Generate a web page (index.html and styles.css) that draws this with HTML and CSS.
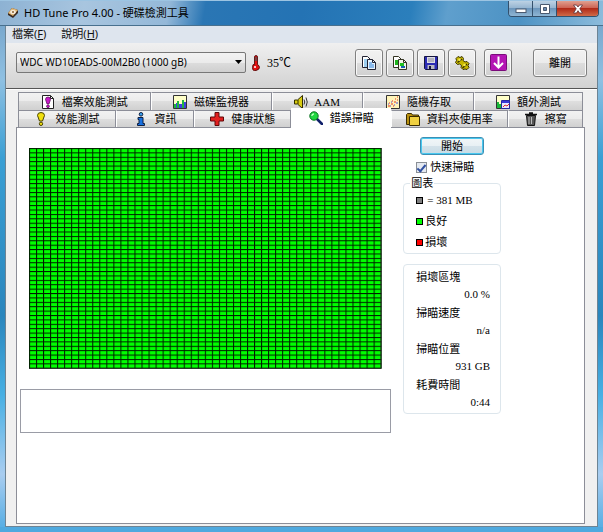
FILE: index.html
```html
<!DOCTYPE html>
<html lang="zh-Hant">
<head>
    <meta charset="UTF-8">
    <meta name="viewport" content="width=device-width, initial-scale=1.0">
    <title>HD Tune Pro 4.00 - 硬碟檢測工具</title>
    <link rel="stylesheet" href="styles.css">
</head>
<body>
<div class="window">
    <header class="titlebar">
        <svg class="app-icon" viewBox="0 0 12 12">
            <path d="M5 1 11 3 11 6 6 11 1 8 1 6z" fill="#3a2a20"/>
            <path d="M5 1 11 3 6 9 1 6z" fill="#e2b878"/>
            <ellipse cx="6" cy="5" rx="2.8" ry="2" fill="#f6ecdc"/>
            <circle cx="6" cy="5" r="1" fill="#8a6030"/>
        </svg>
        <h1>HD Tune Pro 4.00 - 硬碟檢測工具</h1>
        <div class="window-buttons">
            <button type="button" class="win-min" aria-label="最小化">
                <svg viewBox="0 0 12 10"><rect x="1" y="5" width="10" height="3.500" fill="#fff" stroke="#4a5a70"/></svg>
            </button>
            <button type="button" class="win-max" aria-label="最大化">
                <svg viewBox="0 0 12 10"><path d="M1.500.5h9v9h-9z" fill="#fff" stroke="#4a5a70"/><path d="M4.500 3.500h3v3h-3z" fill="#6a8ab0" stroke="#4a5a70"/></svg>
            </button>
            <button type="button" class="win-close" aria-label="關閉">
                <svg viewBox="0 0 12 10"><path d="M1.500 1h3L6 3l1.500-2h3L7.800 4.800 10.500 9h-3L6 6.700 4.500 9h-3l2.700-4.200z" fill="#fff" stroke="#5a3038" stroke-width=".8"/></svg>
            </button>
        </div>
    </header>

    <div class="client">
        <nav class="menubar">
            <a href="#file">檔案(<u>F</u>)</a>
            <a href="#help">說明(<u>H</u>)</a>
        </nav>

        <div class="toolbar">
            <div class="drive">
                <select aria-label="硬碟">
                    <option>WDC WD10EADS-00M2B0 (1000 gB)</option>
                </select>
                <svg class="drive-arrow" viewBox="0 0 7 4"><path d="M0 0h7L3.500 4z" fill="#000"/></svg>
            </div>
            <svg class="thermo" viewBox="0 0 8 16">
                <path d="M2.500 2q0-1.500 1.500-1.500T5.500 2v7.500q2 1 2 3T4 15.500.5 12.500t2-3z" fill="#e01010" stroke="#400" stroke-width=".8"/>
                <path d="M3.300 2h1.400v4H3.300z" fill="#555"/>
                <circle cx="3" cy="12" r="1" fill="#fff"/>
            </svg>
            <span class="temp">35℃</span>
            <div class="tools">
                <button type="button" class="tool" aria-label="複製文字">
                    <svg viewBox="0 0 16 16">
                        <path d="M1.500 1.500h5l3 3v8h-8z" fill="#fff" stroke="#223"/>
                        <path d="M3 5h4M3 7h5M3 9h5M3 11h4" stroke="#3a9be0"/>
                        <path d="M6.500 4.500h5l3 3v7h-8z" fill="#e8f4ff" stroke="#223"/>
                        <path d="M11.500 4.500v3h3" fill="none" stroke="#223"/>
                        <path d="M8 8h3M8 10h5M8 12h5" stroke="#2a7fd8"/>
                    </svg>
                </button>
                <button type="button" class="tool" aria-label="複製圖片">
                    <svg viewBox="0 0 16 16">
                        <path d="M1.500 1.500h5l3 3v8h-8z" fill="#fff" stroke="#332"/>
                        <path d="M3 5h3v5H3z" fill="#1fb51f"/>
                        <path d="M6.500 4.500h5l3 3v7h-8z" fill="#f4f4e8" stroke="#332"/>
                        <path d="M11.500 4.500v3h3" fill="none" stroke="#332"/>
                        <path d="M8 8h4v3H8z" fill="#20c020"/>
                        <path d="M9 11h4v2H9z" fill="#1860b0"/>
                    </svg>
                </button>
                <button type="button" class="tool" aria-label="儲存">
                    <svg viewBox="0 0 16 16">
                        <path d="M1.500 1.500h13v13h-12l-1-1z" fill="#2b2bb4" stroke="#151540"/>
                        <path d="M4 2h8v6H4z" fill="#dcdce4"/>
                        <path d="M5 4h6M5 6h6" stroke="#889"/>
                        <path d="M4.500 10h7v4h-7z" fill="#b8b8c0"/>
                        <path d="M6 11h2v3H6z" fill="#151540"/>
                    </svg>
                </button>
                <button type="button" class="tool" aria-label="選項">
                    <svg viewBox="0 0 16 16">
                        <path d="M2 3.500 4 1.500l2 1 2-1 1.500 2-.5 2 2 1.500 2-.5 2 2-1 2 1 2-2 2-2-.5-2 .5-2-2 .5-2-2-1.500-2 .5-2-2 1-2z" fill="#c8b800" stroke="#3a3400"/>
                        <path d="M3.500 7.500 8 4M8.500 13 13 9" stroke="#3a3400" stroke-width="1.500"/>
                        <circle cx="5.500" cy="4.800" r="1.200" fill="#f4ec50"/>
                        <circle cx="10.500" cy="10" r="1.300" fill="#f4ec50"/>
                    </svg>
                </button>
                <button type="button" class="tool tool-down" aria-label="最小化到系統匣">
                    <svg class="wide" viewBox="0 0 17 17">
                        <rect x=".5" y=".5" width="16" height="16" rx="1" fill="#b414b4" stroke="#7a0c7a"/>
                        <path d="M8.500 2.500v11M4 9l4.500 4.500L13 9" fill="none" stroke="#fff" stroke-width="2"/>
                    </svg>
                </button>
                <button type="button" class="exit">離開</button>
            </div>
        </div>

        <main class="content">
            <div class="tabs" role="tablist">
                <div class="tab-row tab-row-back">
                    <button type="button" role="tab" class="tab w133">
                        <svg viewBox="0 0 14 14"><path d="M1.500.5h8l3 3v10h-11z" fill="#fff" stroke="#222"/><path d="M9.500.5v3h3" fill="none" stroke="#222"/><path d="M7 2q2.500 0 2.500 2.500L8 9H6L4.500 4.500Q4.500 2 7 2z" fill="#c818c8" stroke="#500850" stroke-width=".7"/><circle cx="7" cy="11.300" r="1.400" fill="#c818c8" stroke="#500850" stroke-width=".7"/></svg>
                        檔案效能測試
                    </button>
                    <button type="button" role="tab" class="tab w121">
                        <svg viewBox="0 0 14 14"><path d="M.5.5h13v13H.5z" fill="#ffffc8" stroke="#333"/><path d="M1 9h2v4H1zM4 6h2v7H4zM9 5h2v8H9z" fill="#20b840"/><path d="M3 8h1v5H3zM6 9h3v4H6zM11 7h2v6h-2z" fill="#4040e0"/></svg>
                        磁碟監視器
                    </button>
                    <button type="button" role="tab" class="tab tab-latin w91">
                        <svg viewBox="0 0 14 14"><path d="M.5 5h3l5-4.500v13L3.500 9h-3z" fill="#d8cc10" stroke="#332e00"/><path d="M4 5v4" stroke="#332e00"/><path d="M10 4.500q1.500 2.500 0 5M12 2.500q2.500 4.500 0 9" fill="none" stroke="#333"/></svg>
                        AAM
                    </button>
                    <button type="button" role="tab" class="tab w111">
                        <svg viewBox="0 0 14 14"><path d="M.5.5h13v13H.5z" fill="#fff4b8" stroke="#333"/><path d="M2 11h2M3 8h1M5 9h2M6 6h1M8 7h2M9 4h1M11 5h1M11 2h1M7 11h1" stroke="#e03020"/><path d="M2 9h1M5 7h1M8 10h1M10 8h2M4 11h1" stroke="#5050d8"/></svg>
                        隨機存取
                    </button>
                    <button type="button" role="tab" class="tab w109">
                        <svg viewBox="0 0 14 14"><path d="M.5.5h13v13H.5z" fill="#ffffc8" stroke="#333"/><path d="M1 7h2v6H1zM3 9h2v4H3z" fill="#18b838"/><path d="M5.500 5.500h8v8h-8z" fill="#e8e8ff" stroke="#2828a0"/><path d="M6 6h7v2H6z" fill="#3838d8"/><path d="m7 12 2-2 2 1 2-2" fill="none" stroke="#e03030"/></svg>
                        額外測試
                    </button>
                </div>
                <div class="tab-row tab-row-front">
                    <button type="button" role="tab" class="tab w98">
                        <svg viewBox="0 0 14 14"><path d="M7 .5q3.500 0 3.500 3L8.500 9h-3l-2-5.500q0-3 3.500-3z" fill="#f0e010" stroke="#4a4400"/><circle cx="7" cy="11.800" r="1.700" fill="#f0e010" stroke="#4a4400"/></svg>
                        效能測試
                    </button>
                    <button type="button" role="tab" class="tab w78">
                        <svg viewBox="0 0 14 14"><circle cx="7" cy="2.300" r="1.800" fill="#38a0f0" stroke="#102040"/><path d="M4 5.500h5v6h1.500v2h-7v-2H5v-4H4z" fill="#1870e0" stroke="#102040"/></svg>
                        資訊
                    </button>
                    <button type="button" role="tab" class="tab w97">
                        <svg viewBox="0 0 14 14"><path d="M5 .5h4V5h4.500v4H9v4.500H5V9H.5V5H5z" fill="#e02020" stroke="#600808"/></svg>
                        健康狀態
                    </button>
                    <button type="button" role="tab" class="tab tab-active w100" aria-selected="true">
                        <svg viewBox="0 0 14 14"><path d="m8 8 5 5" stroke="#10206a" stroke-width="2.600" stroke-linecap="round"/><circle cx="5" cy="5" r="4.200" fill="#20d840" stroke="#0b7020"/><path d="M2.800 5Q3 3 5 2.800" fill="none" stroke="#c8ffc8" stroke-width="1.300"/></svg>
                        錯誤掃瞄
                    </button>
                    <button type="button" role="tab" class="tab w117">
                        <svg viewBox="0 0 14 14"><path d="M.5 12.500v-10l1-1h4l1 1.500h6v9.500z" fill="#b89010" stroke="#3a2c00"/><path d="M3.500 4.500h10v9h-10z" fill="#f0d040" stroke="#3a2c00"/></svg>
                        資料夾使用率
                    </button>
                    <button type="button" role="tab" class="tab w75">
                        <svg viewBox="0 0 14 14"><path d="M2.500 3.500h9l-1 10h-7z" fill="#555" stroke="#111"/><path d="M1 2.500h12M5 1h4" stroke="#111" stroke-width="1.500"/><path d="M5 5v7M7.500 5v7" stroke="#bbb"/></svg>
                        擦寫
                    </button>
                </div>
            </div>

            <section class="panel" role="tabpanel">
                <div class="scan">
                    <svg class="blocks" viewBox="0 0 353 221" preserveAspectRatio="none">
                        <defs>
                            <pattern id="block" width="7.040" height="4.400" patternUnits="userSpaceOnUse">
                                <rect width="7.040" height="4.400" fill="#001c00"/>
                                <rect x="1" y="1" width="6.040" height="3.400" fill="#00ff00"/>
                            </pattern>
                        </defs>
                        <rect width="353" height="221" fill="url(#block)"/>
                        <path d="M352.500 0v220.500H0" fill="none" stroke="#222"/>
                    </svg>
                    <div class="log"></div>
                </div>
                <aside class="side">
                    <button type="button" class="start">開始</button>
                    <label class="quick"><input type="checkbox" checked>快速掃瞄</label>
                    <fieldset class="legend">
                        <legend>圖表</legend>
                        <ul>
                            <li class="block-size"><i class="swatch gray"></i>= 381 MB</li>
                            <li><i class="swatch green"></i>良好</li>
                            <li><i class="swatch red"></i>損壞</li>
                        </ul>
                    </fieldset>
                    <dl class="stats">
                        <div><dt>損壞區塊</dt><dd>0.0 %</dd></div>
                        <div><dt>掃瞄速度</dt><dd>n/a</dd></div>
                        <div><dt>掃瞄位置</dt><dd>931 GB</dd></div>
                        <div><dt>耗費時間</dt><dd>0:44</dd></div>
                    </dl>
                </aside>
            </section>
        </main>
    </div>
</div>
</body>
</html>
```
FILE: styles.css
```css
* {
    box-sizing: border-box;
}

body {
    margin: 0;
    font-family: "Liberation Serif", "Noto Sans CJK TC", serif;
    font-size: 11px;
    line-height: 18px;
    color: #000;
}

button, select {
    font: inherit;
    color: inherit;
    padding: 0;
    margin: 0;
}

svg {
    display: block;
    flex: none;
}

/* window frame */
.window {
    display: flex;
    flex-direction: column;
    min-height: 100vh;
    padding: 0 5px;
    border-bottom: 5px solid #4fa9df;
    background: linear-gradient(#6f9dc4 0, #8fc0e2 15%, #3a9fd4 30%, #2a86bd 60%, #48b0e4 75%, #a9cdf0 90%, #58aee4);
}

.titlebar {
    display: flex;
    align-items: center;
    height: 26px;
    margin: 0 -5px;
    padding-left: 7px;
    border-top: 1px solid #9cc4e2;
    border-bottom: 1px solid #48708e;
    background: linear-gradient(100deg, #8db2d3 0, #a8c5df 14%, #94b8d8 28%, #2a76b4 34%, #2473b4 50%, #2b7fbc 68%, #5f9fcd 74%, #4c92c4 86%, #8dbcdc);
}

.app-icon {
    width: 12px;
    height: 12px;
}

.titlebar h1 {
    flex: 1;
    margin: 0 0 0 5px;
    font-family: "Noto Sans", "Noto Sans CJK TC", sans-serif;
    font-size: 11px;
    font-weight: normal;
    white-space: nowrap;
}

.window-buttons {
    display: flex;
    align-self: flex-start;
    height: 16px;
    margin-right: 4px;
    border: 1px solid #33506c;
    border-top: 0;
    border-radius: 0 0 4px 4px;
    overflow: hidden;
}

.window-buttons button {
    display: flex;
    align-items: center;
    justify-content: center;
    width: 24px;
    border: 0;
    border-right: 1px solid #33506c;
    background: linear-gradient(#bdd2e4, #94b4d0 48%, #6c96bc 50%, #8fb6d4);
}

.window-buttons .win-close {
    width: 41px;
    border-right: 0;
    background: linear-gradient(#e0a090, #cc6050 48%, #b02a18 50%, #d06a48);
}

.window-buttons svg {
    width: 12px;
    height: 10px;
}

.client {
    flex: 1;
    display: flex;
    flex-direction: column;
    border: 1px solid #6d8494;
    border-top: 0;
    background: #f0f0f0;
}

.menubar {
    display: flex;
    gap: 15px;
    height: 17px;
    padding-left: 6px;
    line-height: 16px;
    font-family: "Noto Sans", "Noto Sans CJK TC", sans-serif;
    background: #dee5ee;
}

.menubar a {
    color: #111;
    text-decoration: none;
}

/* toolbar */
.toolbar {
    display: flex;
    align-items: center;
    height: 46px;
    padding: 0 10px 6px;
    border-bottom: 1px solid #555;
    background: linear-gradient(#f0f0f0, #d2d2d2);
}

.drive {
    position: relative;
    flex: 0 1 230px;
}

.drive select {
    display: block;
    appearance: none;
    width: 100%;
    height: 21px;
    padding: 0 16px 2px 3px;
    border: 1px solid #777;
    border-radius: 2px;
    font-family: "Noto Sans", sans-serif;
    font-size: 10px;
    background: linear-gradient(#f2f2f2, #ebebeb 50%, #ddd 50%, #cfcfcf);
}

.drive-arrow {
    position: absolute;
    right: 4px;
    top: 8px;
    width: 7px;
    height: 4px;
    pointer-events: none;
}

.thermo {
    width: 8px;
    height: 16px;
    margin: 0 7px 0 6px;
}

.temp {
    font-size: 12px;
}

.tools {
    display: flex;
    gap: 3px;
    margin-left: auto;
}

.tool, .exit {
    display: flex;
    align-items: center;
    justify-content: center;
    width: 28px;
    height: 28px;
    border: 1px solid #808080;
    border-radius: 3px;
    box-shadow: inset 0 0 0 1px #f8f8f8;
    background: linear-gradient(#f2f2f2, #ebebeb 50%, #ddd 50%, #d0d0d0);
}

.tool svg {
    width: 16px;
    height: 16px;
}

.tool svg.wide {
    width: 17px;
    height: 17px;
}

.tool-down {
    margin-left: 5px;
}

.exit {
    width: 54px;
    margin-left: 18px;
}

/* tabs */
.content {
    flex: 1;
    display: flex;
    flex-direction: column;
    padding: 2px 12px 2px 10px;
    border-top: 1px solid #fff;
}

.tabs {
    padding: 0 2px;
}

.tab-row {
    display: flex;
    height: 18px;
}

.tab-row-front {
    height: 17px;
}

.tab {
    display: flex;
    align-items: center;
    justify-content: center;
    gap: 7px;
    min-width: 0;
    border: 1px solid #8c8e98;
    border-left-color: #fff;
    border-bottom: 0;
    white-space: nowrap;
    line-height: 16px;
    background: linear-gradient(#f2f2f2, #ebebeb 50%, #dedede 50%, #d0d0d0);
}

.tab:first-child {
    border-left-color: #8c8e98;
}

.tab svg {
    width: 14px;
    height: 14px;
}

.tab-latin {
    gap: 6px;
}

.tab-active {
    position: relative;
    margin: -2px 0 -1px;
    padding-bottom: 2px;
    border-color: #fff;
    background: #fff;
}

/* tab widths are shares of the row */
.w133 { flex: 133 1 0; }
.w121 { flex: 121 1 0; }
.w117 { flex: 117 1 0; }
.w111 { flex: 111 1 0; }
.w109 { flex: 109 1 0; }
.w100 { flex: 100 1 0; }
.w98 { flex: 98 1 0; }
.w97 { flex: 97 1 0; }
.w91 { flex: 91 1 0; }
.w78 { flex: 78 1 0; }
.w75 { flex: 75 1 0; }

/* error scan page */
.panel {
    flex: 1;
    display: grid;
    grid-template-columns: 372fr 98fr;
    align-items: start;
    gap: 12px;
    padding: 9px 83px 9px 3px;
    border: 1px solid #8c8e98;
    background: #fff;
}

.scan {
    padding-top: 11px;
}

.blocks {
    width: 95%;
    height: auto;
    margin: 0 auto;
}

.log {
    height: 44px;
    margin-top: 20px;
    border: 1px solid #9a9ca6;
}

.side {
    display: flex;
    flex-direction: column;
}

.start {
    align-self: center;
    width: 64px;
    height: 18px;
    border: 1px solid #3c8fb4;
    border-radius: 3px;
    box-shadow: inset 0 0 0 1px #48c8f0;
    line-height: 15px;
    background: linear-gradient(#f2f6f8, #e8f0f4 50%, #d4e2ea 50%, #c8dce6);
}

.quick {
    display: flex;
    align-items: center;
    gap: 3px;
    height: 18px;
    margin: 3px 0 0 13px;
    white-space: nowrap;
}

.quick input {
    width: 11px;
    height: 11px;
    margin: 0;
    appearance: none;
    display: grid;
    place-items: center;
    border: 1px solid #8a8f96;
    background: #e4e9f0;
}

.quick input:checked::before {
    content: "";
    width: 3px;
    height: 7px;
    border: solid #3050a0;
    border-width: 0 2px 2px 0;
    transform: rotate(40deg);
}

.legend {
    margin: 0;
    min-width: 0;
    padding: 0 0 2px 12px;
    border: 1px solid #dde6ec;
    border-radius: 4px;
}

.legend legend {
    margin-left: -6px;
    padding: 0 1px;
    height: 15px;
    line-height: 15px;
}

.legend ul {
    display: grid;
    gap: 3px;
    margin: 0;
    padding: 0;
    list-style: none;
}

.legend li {
    display: flex;
    align-items: center;
    gap: 2px;
    white-space: nowrap;
}

.legend .block-size {
    gap: 4px;
}

.swatch {
    width: 7px;
    height: 7px;
    border: 1px solid #000;
}

.gray { background: #808080; }
.green { background: #00ff00; }
.red { background: #ff0000; }

.stats {
    display: grid;
    gap: 1px;
    margin: 10px 0 0;
    padding: 3px 10px 2px 12px;
    border: 1px solid #dde6ec;
    border-radius: 4px;
    white-space: nowrap;
}

.stats dt {
    line-height: 18px;
}

.stats dd {
    margin: 0;
    line-height: 17px;
    text-align: right;
}
```
